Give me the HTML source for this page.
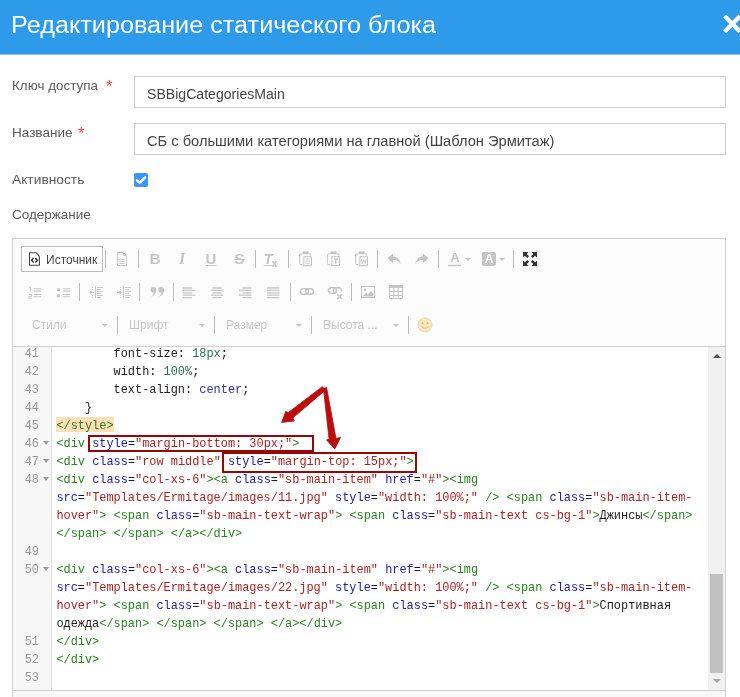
<!DOCTYPE html>
<html lang="ru">
<head>
<meta charset="utf-8">
<title>Редактирование статического блока</title>
<style>
*{box-sizing:border-box;margin:0;padding:0}
html,body{width:740px;height:697px;overflow:hidden;background:#fff}
body{will-change:transform}
body{position:relative;font-family:"Liberation Sans",sans-serif;color:#555}
.hdr{position:absolute;left:0;top:0;width:740px;height:54px;background:#2d9bea;box-shadow:0 1px 0 rgba(60,130,200,.55)}
.hdr h1{position:absolute;left:11px;top:10px;font-weight:normal;font-size:23px;line-height:30px;transform:scaleX(1.097);color:#fff;white-space:nowrap;letter-spacing:0}
.close{position:absolute;left:715px;top:4px}
.lbl{position:absolute;left:12px;font-size:13px;line-height:18px;color:#5a5a5a;white-space:nowrap}
.lbl,.inp span,.hdr h1{transform-origin:0 50%}
.inp span{display:inline-block}
.ast{position:absolute;color:#e9454a;font-weight:normal;font-size:17px;line-height:18px}
.inp{position:absolute;left:134px;width:592px;height:32px;border:1px solid #ccc;background:#fff;font-size:14px;line-height:35px;padding-left:12px;color:#444;white-space:nowrap}
.chk{position:absolute;left:134px;top:173px;width:14px;height:14px;background:#3a97f7;border-radius:2px}
.ed{position:absolute;left:12px;top:238px;width:714px;height:470px;border:1px solid #d1d1d1;background:#f8f8f8}
.tb{position:absolute;left:0;top:0;width:712px;height:108px;background:#fcfcfc;border-bottom:1px solid #d1d1d1}
.cm{position:absolute;left:0;top:108px;width:712px;height:344px;background:#fff;overflow:hidden;border-bottom:1px solid #d1d1d1}
.gut{position:absolute;left:0;top:0;width:39px;height:344px;background:#f7f7f7;border-right:1px solid #ddd}
.code{position:absolute;left:0;top:-2px;font-family:"Liberation Mono",monospace;font-size:11.91px;line-height:18px;color:#1c1c1c}
.ln{position:relative;height:18px;white-space:pre}
.ln i{position:absolute;left:0;width:26px;text-align:right;color:#999;font-style:normal}
.ln u{position:absolute;left:30px;top:6px;width:0;height:0;border-left:3px solid transparent;border-right:3px solid transparent;border-top:4px solid #9a9a9a;font-size:0}
.ln s{position:absolute;left:43.4px;text-decoration:none}
.t{color:#2a8220}.a{color:#2020a8}.s{color:#a82525}.n{color:#2a7050}.at{color:#3030a0}
.mt{background:#ffdfb8;display:inline-block;height:15px;line-height:18px;vertical-align:top}
.sb{position:absolute;left:695px;top:0;width:17px;height:343px;background:#f1f1f1}
.sb .th{position:absolute;left:2px;top:227px;width:13px;height:99px;background:#c1c1c1}
.sb .au{position:absolute;left:4.5px;top:6.5px;width:0;height:0;border-left:4px solid transparent;border-right:4px solid transparent;border-bottom:4px solid #505050}
.sb .ad{position:absolute;left:4.5px;top:332px;width:0;height:0;border-left:4px solid transparent;border-right:4px solid transparent;border-top:4px solid #a3a3a3}
.ic{position:absolute}
.sep{position:absolute;width:1px;height:18px;background:#bcbcbc}
.srcbtn{position:absolute;width:82px;height:26px;border:1px solid #bcbcbc;background:#fff}
.btxt{position:absolute;font-size:12px;line-height:16px;color:#484848;white-space:nowrap}
.ltr{position:absolute;width:16px;height:16px;text-align:center;font-size:14px;line-height:16px;color:#484848;opacity:.3;white-space:nowrap}
.ltr sub{font-size:10px;font-style:normal;font-weight:bold;vertical-align:baseline;position:relative;top:3px;left:-1px}
.cmb{position:absolute;font-size:12px;line-height:16px;color:#484848;opacity:.3;white-space:nowrap}
.arr{position:absolute;width:0;height:0;border-left:3px solid transparent;border-right:3px solid transparent;border-top:3px solid #484848;opacity:.3}
.anno{position:absolute;left:0;top:0;pointer-events:none}
</style>
</head>
<body>
<div class="hdr"><h1 id="t1">Редактирование статического блока</h1>
<svg class="close" width="30" height="40" viewBox="715 4 30 40"><path d="M724.5 16.100L740.1 31.700M740.1 16.100L724.5 31.700" stroke="#fff" stroke-width="4.300" fill="none"/></svg>
</div>
<div class="lbl" id="l1" style="top:77px;transform:scaleX(1.032)">Ключ доступа</div><b class="ast" style="left:106px;top:78px">*</b>
<div class="inp" style="top:76px"><span id="i1" style="transform:scaleX(1.006)">SBBigCategoriesMain</span></div>
<div class="lbl" id="l2" style="top:124px;transform:scaleX(1.041)">Название</div><b class="ast" style="left:78px;top:125px">*</b>
<div class="inp" style="top:123px"><span id="i2" style="transform:scaleX(1.047)">СБ с большими категориями на главной (Шаблон Эрмитаж)</span></div>
<div class="lbl" id="l3" style="top:171px;transform:scaleX(1.06)">Активность</div>
<div class="chk"><svg width="14" height="14" viewBox="0 0 14 14"><path d="M2.900 7.300L5.600 9.900 11.200 4.400" stroke="#fff" stroke-width="2.300" stroke-linecap="round" stroke-linejoin="round" fill="none"/></svg></div>
<div class="lbl" id="l4" style="top:206px;transform:scaleX(1.037)">Содержание</div>
<div class="ed">
<div class="tb" id="tb">
<div class="srcbtn" style="left:8px;top:7px"></div>
<svg class="ic" style="left:13px;top:12px;opacity:1" width="16" height="16" viewBox="0 0 16 16"><path d="M3.500 1.700H10.100L13.400 5.300V14.300H3.500z" fill="none" stroke="#484848" stroke-width="1.100" stroke-linejoin="round"/><path d="M7.700 7.100L5.600 9.300 7.700 11.500M9.300 7.100L11.400 9.300 9.300 11.500" fill="none" stroke="#333" stroke-width="1.500"/></svg>
<div class="btxt" style="left:33px;top:13px;">Источник</div>
<div class="sep" style="left:92px;top:11px"></div>
<svg class="ic" style="left:101px;top:12px;opacity:0.3" width="16" height="16" viewBox="0 0 16 16"><path d="M3.5 1.5h6l3 3v10h-9z" fill="none" stroke="#484848" stroke-width="1"/><path d="M9.5 1.5v3h3" fill="none" stroke="#484848" stroke-width="1"/><path d="M5.5 8.5h5M5.5 10.5h5M5.5 12.5h5" stroke="#484848" stroke-width="1"/></svg>
<div class="sep" style="left:125px;top:11px"></div>
<div class="ltr" style="left:134px;top:12px;font-weight:bold;font-size:15.500px">B</div>
<div class="ltr" style="left:161px;top:12px;font-weight:bold;font-style:italic;font-size:16px;font-family:'Liberation Serif',serif">I</div>
<div class="ltr" style="left:190px;top:12px;font-weight:bold;font-size:15px;text-decoration:underline;text-underline-offset:1px">U</div>
<div class="ltr" style="left:218.5px;top:12px;font-weight:bold;font-size:15.500px;text-decoration:line-through">S</div>
<div class="sep" style="left:242px;top:11px"></div>
<div class="ltr" style="left:250px;top:12px;font-weight:bold;font-style:italic;font-size:14.500px"><span style="text-decoration:underline;text-underline-offset:1px">T</span><sub>x</sub></div>
<div class="sep" style="left:275px;top:11px"></div>
<svg class="ic" style="left:284px;top:12px;opacity:0.3" width="16" height="16" viewBox="0 0 16 16"><path d="M5.500 2.900H3.600q-1 0-1 1V12.600q0 1 1 1H5" fill="none" stroke="#484848" stroke-width="1"/><path d="M11.500 2.900H13q1 0 1 1V4.500" fill="none" stroke="#484848" stroke-width="1"/><path d="M5.500 0.400h6v2.800h-6z" fill="#484848"/><rect x="6.900" y="5.700" width="7.600" height="8.800" fill="none" stroke="#484848" stroke-width="1"/><path d="M8.500 8h4.400M8.500 10.100h4.400M8.500 12.200h4.400" stroke="#484848" stroke-width="0.900"/></svg>
<svg class="ic" style="left:312px;top:12px;opacity:0.3" width="16" height="16" viewBox="0 0 16 16"><path d="M5.500 2.900H3.600q-1 0-1 1V12.600q0 1 1 1H5" fill="none" stroke="#484848" stroke-width="1"/><path d="M11.500 2.900H13q1 0 1 1V4.500" fill="none" stroke="#484848" stroke-width="1"/><path d="M5.500 0.400h6v2.800h-6z" fill="#484848"/><rect x="6.900" y="5.700" width="7.600" height="8.800" fill="none" stroke="#484848" stroke-width="1"/><path d="M8.500 8.100h4.400M10.700 8.100v4.800" stroke="#484848" stroke-width="1.200" fill="none"/></svg>
<svg class="ic" style="left:340px;top:12px;opacity:0.3" width="16" height="16" viewBox="0 0 16 16"><path d="M5.500 2.900H3.600q-1 0-1 1V12.600q0 1 1 1H5" fill="none" stroke="#484848" stroke-width="1"/><path d="M11.500 2.900H13q1 0 1 1V4.500" fill="none" stroke="#484848" stroke-width="1"/><path d="M5.500 0.400h6v2.800h-6z" fill="#484848"/><rect x="6.900" y="5.700" width="7.600" height="8.800" fill="none" stroke="#484848" stroke-width="1"/><path d="M8.300 7.800l1 4.800 1.400-3.800 1.400 3.800 1-4.800" stroke="#484848" stroke-width="0.900" fill="none"/></svg>
<div class="sep" style="left:364px;top:11px"></div>
<svg class="ic" style="left:373px;top:12px;opacity:0.3" width="16" height="16" viewBox="0 0 16 16"><path d="M1.5 7.2L7 2.5v3c4 0 6.8 2 7.5 7.2-1.6-2.7-3.8-3.7-7.5-3.6v3z" fill="#484848"/></svg>
<svg class="ic" style="left:401px;top:12px;opacity:0.3" width="16" height="16" viewBox="0 0 16 16"><path d="M14.5 7.2L9 2.5v3c-4 0-6.8 2-7.5 7.2 1.6-2.7 3.800-3.700 7.500-3.600v3z" fill="#484848"/></svg>
<div class="sep" style="left:425px;top:11px"></div>
<svg class="ic" style="left:434px;top:12px;opacity:0.3" width="16" height="16" viewBox="0 0 16 16"><path d="M1 14.500h13" stroke="#484848" stroke-width="1.400"/></svg>
<div class="ltr" style="left:434px;top:11px;font-weight:bold;font-size:13px">A</div>
<div class="arr" style="left:452px;top:19px"></div>
<svg class="ic" style="left:468px;top:12px;opacity:0.3" width="16" height="16" viewBox="0 0 16 16"><rect x="1" y="1" width="14" height="14" rx="2" fill="#484848"/></svg>
<div class="ltr" style="left:468px;top:12px;font-weight:bold;font-size:12px;color:#fcfcfc;opacity:1">A</div>
<div class="arr" style="left:486px;top:19px"></div>
<div class="sep" style="left:500px;top:11px"></div>
<svg class="ic" style="left:509px;top:12px;opacity:1" width="16" height="16" viewBox="0 0 16 16"><path d="M1 1h5.600L4.700 2.900 7.100 5.300 5.300 7.100 2.900 4.700 1 6.600zM15 1v5.600l-1.900-1.900-2.400 2.400-1.800-1.800 2.400-2.400L9.400 1zM1 15V9.400l1.900 1.900 2.400-2.400 1.800 1.800-2.400 2.400L6.600 15zM15 15H9.400l1.900-1.900-2.400-2.400 1.800-1.800 2.400 2.400L15 9.400z" fill="#333"/></svg>
<svg class="ic" style="left:14px;top:45px;opacity:0.3" width="16" height="16" viewBox="0 0 16 16"><path d="M6.800 4.800h7.500M6.800 7.100h7.500M6.800 10.500h7.500M6.800 12.800h7.500" stroke="#484848" stroke-width="1.100"/><path d="M2.200 4.200l1.200-.9v4.200" fill="none" stroke="#484848" stroke-width="1"/><path d="M1.800 10.400h2.900v1.900H1.800v1.900h2.900" fill="none" stroke="#484848" stroke-width="0.900"/></svg>
<svg class="ic" style="left:42px;top:45px;opacity:0.3" width="16" height="16" viewBox="0 0 16 16"><path d="M7.700 4.800H15M7.700 7.100H15M7.700 10.500H15M7.700 12.800H15" stroke="#484848" stroke-width="1.100"/><circle cx="3.500" cy="5.800" r="1.800" fill="#484848"/><circle cx="3.500" cy="11.800" r="1.800" fill="#484848"/></svg>
<div class="sep" style="left:66px;top:44px"></div>
<svg class="ic" style="left:75px;top:45px;opacity:0.3" width="16" height="16" viewBox="0 0 16 16"><path d="M7.500 2v12" stroke="#484848" stroke-width="1"/><path d="M9 3.500h6M9 5.500h4M9 7.500h6M9 9.500h4M9 11.500h6M9 13.500h4" stroke="#484848" stroke-width="0.900"/><path d="M1 8.500L3.500 6.500v1.500H6v1H3.500v1.500z" fill="#484848"/><path d="M4 3.500h1M4 5.500h1M4 11.500h1M4 13.500h1" stroke="#484848" stroke-width="0.900"/></svg>
<svg class="ic" style="left:103px;top:45px;opacity:0.3" width="16" height="16" viewBox="0 0 16 16"><path d="M7.500 2v12" stroke="#484848" stroke-width="1"/><path d="M9 3.500h6M9 5.500h4M9 7.500h6M9 9.500h4M9 11.500h6M9 13.500h4" stroke="#484848" stroke-width="0.900"/><path d="M6 8.500L3.500 6.500v1.500H1v1h2.500v1.500z" fill="#484848"/><path d="M4 3.500h1M4 5.500h1M4 11.500h1M4 13.500h1" stroke="#484848" stroke-width="0.900"/></svg>
<div class="sep" style="left:126px;top:44px"></div>
<svg class="ic" style="left:136px;top:45px;opacity:0.3" width="16" height="16" viewBox="0 0 16 16"><path d="M1.500 5.800a2.900 2.900 0 1 1 5.800 0c0 3.300-1.700 5.500-5 7 1.500-1.600 2.300-2.900 2.300-4.200A2.900 2.900 0 0 1 1.500 5.800zM9.200 5.800a2.900 2.900 0 1 1 5.800 0c0 3.300-1.700 5.500-5 7 1.500-1.600 2.300-2.900 2.300-4.200A2.900 2.900 0 0 1 9.200 5.800z" fill="#484848"/></svg>
<div class="sep" style="left:160px;top:44px"></div>
<svg class="ic" style="left:168px;top:45px;opacity:0.3" width="16" height="16" viewBox="0 0 16 16"><path d="M2 4h9M2 6.400h12.500M2 8.800h9M2 11.200h12.500M2 13.600h9" stroke="#484848" stroke-width="1.300"/></svg>
<svg class="ic" style="left:196px;top:45px;opacity:0.3" width="16" height="16" viewBox="0 0 16 16"><path d="M3.500 4h9M1.800 6.400h12.500M3.500 8.800h9M1.800 11.200h12.500M3.500 13.600h9" stroke="#484848" stroke-width="1.300"/></svg>
<svg class="ic" style="left:224px;top:45px;opacity:0.3" width="16" height="16" viewBox="0 0 16 16"><path d="M5.500 4h9M2 6.400h12.500M5.500 8.800h9M2 11.200h12.500M5.500 13.600h9" stroke="#484848" stroke-width="1.300"/></svg>
<svg class="ic" style="left:252px;top:45px;opacity:0.3" width="16" height="16" viewBox="0 0 16 16"><path d="M2 4h12.500M2 6.400h12.500M2 8.800h12.500M2 11.200h12.500M2 13.600h12.500" stroke="#484848" stroke-width="1.300"/></svg>
<div class="sep" style="left:277px;top:44px"></div>
<svg class="ic" style="left:286px;top:45px;opacity:0.3" width="16" height="16" viewBox="0 0 16 16"><rect x="1.500" y="4.800" width="8" height="5.500" rx="2.750" fill="none" stroke="#484848" stroke-width="1.500"/><rect x="6.500" y="4.800" width="8" height="5.500" rx="2.750" fill="none" stroke="#484848" stroke-width="1.500"/></svg>
<svg class="ic" style="left:314px;top:45px;opacity:0.3" width="16" height="16" viewBox="0 0 16 16"><rect x="1.500" y="3.800" width="8" height="5.500" rx="2.750" fill="none" stroke="#484848" stroke-width="1.500"/><path d="M9.200 9.300a2.750 2.750 0 0 1 0-5.500h2.600a2.750 2.750 0 0 1 2.600 3.600" fill="none" stroke="#484848" stroke-width="1.500"/><path d="M10.300 10.300l4.700 4.700M15 10.300L10.300 15" stroke="#484848" stroke-width="1.600"/></svg>
<div class="sep" style="left:338px;top:44px"></div>
<svg class="ic" style="left:347px;top:45px;opacity:0.3" width="16" height="16" viewBox="0 0 16 16"><rect x="1.500" y="2.500" width="13" height="11" fill="none" stroke="#484848" stroke-width="1"/><circle cx="5" cy="5.800" r="1.300" fill="#484848"/><path d="M2.500 12.500l3.500-4 2 2 3-3.500 2.500 3v2.500z" fill="#484848"/></svg>
<svg class="ic" style="left:375px;top:45px;opacity:0.3" width="16" height="16" viewBox="0 0 16 16"><path d="M1 1h14v14H1z" fill="#484848"/><path d="M2 4h3.330v3H2zM6.330 4h3.340v3H6.330zM10.670 4H14v3h-3.330zM2 8h3.330v3H2zM6.330 8h3.340v3H6.330zM10.670 8H14v3h-3.330zM2 12h3.330v2H2zM6.330 12h3.340v2H6.330zM10.670 12H14v2h-3.330z" fill="#fcfcfc"/></svg>
<div class="cmb" style="left:19px;top:78px;">Стили</div>
<div class="arr" style="left:89px;top:85px"></div>
<div class="sep" style="left:104px;top:77px"></div>
<div class="cmb" style="left:116px;top:78px;">Шрифт</div>
<div class="arr" style="left:186px;top:85px"></div>
<div class="sep" style="left:201px;top:77px"></div>
<div class="cmb" style="left:213px;top:78px;">Размер</div>
<div class="arr" style="left:283px;top:85px"></div>
<div class="sep" style="left:298px;top:77px"></div>
<div class="cmb" style="left:310px;top:78px;">Высота ...</div>
<div class="arr" style="left:380px;top:85px"></div>
<div class="sep" style="left:395px;top:77px"></div>
<svg class="ic" style="left:404px;top:78px;opacity:0.35" width="16" height="16" viewBox="0 0 16 16"><circle cx="8" cy="8" r="7" fill="#f5c33b" stroke="#c98a1a" stroke-width="0.800"/><circle cx="5.500" cy="6.300" r="1" fill="#6b4a10"/><circle cx="10.500" cy="6.300" r="1" fill="#6b4a10"/><path d="M4.200 9.500q3.800 3.500 7.600 0" fill="none" stroke="#6b4a10" stroke-width="1"/></svg>
</div><!--tbend-->
<div class="cm">
<div class="gut"></div>
<div class="code">
<div class="ln"><i>41</i><s>        font-size: <span class="n">18px</span>;</s></div>
<div class="ln"><i>42</i><s>        width: <span class="n">100%</span>;</s></div>
<div class="ln"><i>43</i><s>        text-align: <span class="at">center</span>;</s></div>
<div class="ln"><i>44</i><s>    }</s></div>
<div class="ln"><i>45</i><s><span class="t mt">&lt;/style&gt;</span></s></div>
<div class="ln"><i>46</i><u></u><s><span class="t">&lt;div</span> <span class="a">style</span>=<span class="s">"margin-bottom: 30px;"</span><span class="t">&gt;</span></s></div>
<div class="ln"><i>47</i><u></u><s><span class="t">&lt;div</span> <span class="a">class</span>=<span class="s">"row middle"</span> <span class="a">style</span>=<span class="s">"margin-top: 15px;"</span><span class="t">&gt;</span></s></div>
<div class="ln"><i>48</i><u></u><s><span class="t">&lt;div</span> <span class="a">class</span>=<span class="s">"col-xs-6"</span><span class="t">&gt;&lt;a</span> <span class="a">class</span>=<span class="s">"sb-main-item"</span> <span class="a">href</span>=<span class="s">"#"</span><span class="t">&gt;&lt;img</span></s></div>
<div class="ln"><s><span class="a">src</span>=<span class="s">"Templates/Ermitage/images/11.jpg"</span> <span class="a">style</span>=<span class="s">"width: 100%;"</span> <span class="t">/&gt;</span> <span class="t">&lt;span</span> <span class="a">class</span>=<span class="s">"sb-main-item-</span></s></div>
<div class="ln"><s><span class="s">hover"</span><span class="t">&gt;</span> <span class="t">&lt;span</span> <span class="a">class</span>=<span class="s">"sb-main-text-wrap"</span><span class="t">&gt;</span> <span class="t">&lt;span</span> <span class="a">class</span>=<span class="s">"sb-main-text cs-bg-1"</span><span class="t">&gt;</span>Джинсы<span class="t">&lt;/span&gt;</span></s></div>
<div class="ln"><s><span class="t">&lt;/span&gt;</span> <span class="t">&lt;/span&gt;</span> <span class="t">&lt;/a&gt;&lt;/div&gt;</span></s></div>
<div class="ln"><i>49</i><s></s></div>
<div class="ln"><i>50</i><u></u><s><span class="t">&lt;div</span> <span class="a">class</span>=<span class="s">"col-xs-6"</span><span class="t">&gt;&lt;a</span> <span class="a">class</span>=<span class="s">"sb-main-item"</span> <span class="a">href</span>=<span class="s">"#"</span><span class="t">&gt;&lt;img</span></s></div>
<div class="ln"><s><span class="a">src</span>=<span class="s">"Templates/Ermitage/images/22.jpg"</span> <span class="a">style</span>=<span class="s">"width: 100%;"</span> <span class="t">/&gt;</span> <span class="t">&lt;span</span> <span class="a">class</span>=<span class="s">"sb-main-item-</span></s></div>
<div class="ln"><s><span class="s">hover"</span><span class="t">&gt;</span> <span class="t">&lt;span</span> <span class="a">class</span>=<span class="s">"sb-main-text-wrap"</span><span class="t">&gt;</span> <span class="t">&lt;span</span> <span class="a">class</span>=<span class="s">"sb-main-text cs-bg-1"</span><span class="t">&gt;</span>Спортивная</s></div>
<div class="ln"><s>одежда<span class="t">&lt;/span&gt;</span> <span class="t">&lt;/span&gt;</span> <span class="t">&lt;/span&gt;</span> <span class="t">&lt;/a&gt;&lt;/div&gt;</span></s></div>
<div class="ln"><i>51</i><s><span class="t">&lt;/div&gt;</span></s></div>
<div class="ln"><i>52</i><s><span class="t">&lt;/div&gt;</span></s></div>
<div class="ln"><i>53</i><s></s></div>
</div>
<div class="sb"><div class="th"></div><div class="au"></div><div class="ad"></div></div>
</div>
</div>
<svg class="anno" width="740" height="697" viewBox="0 0 740 697">
<rect x="89" y="436" width="224" height="15" fill="none" stroke="#960808" stroke-width="2"/>
<rect x="223" y="453" width="193" height="19" fill="none" stroke="#960808" stroke-width="2"/>
<g transform="translate(270 380) scale(0.108108)" fill="#bb0d0d" stroke="#bb0d0d" stroke-width="8" stroke-linejoin="round">
<polygon points="484,62 168,302 146,290 108,393 224,379 212,350 514,92"/>
<polygon points="495,85 547,546 523,555 600,637 652,532 610,540 523,68"/>
</g>
</svg>
</body>
</html>
